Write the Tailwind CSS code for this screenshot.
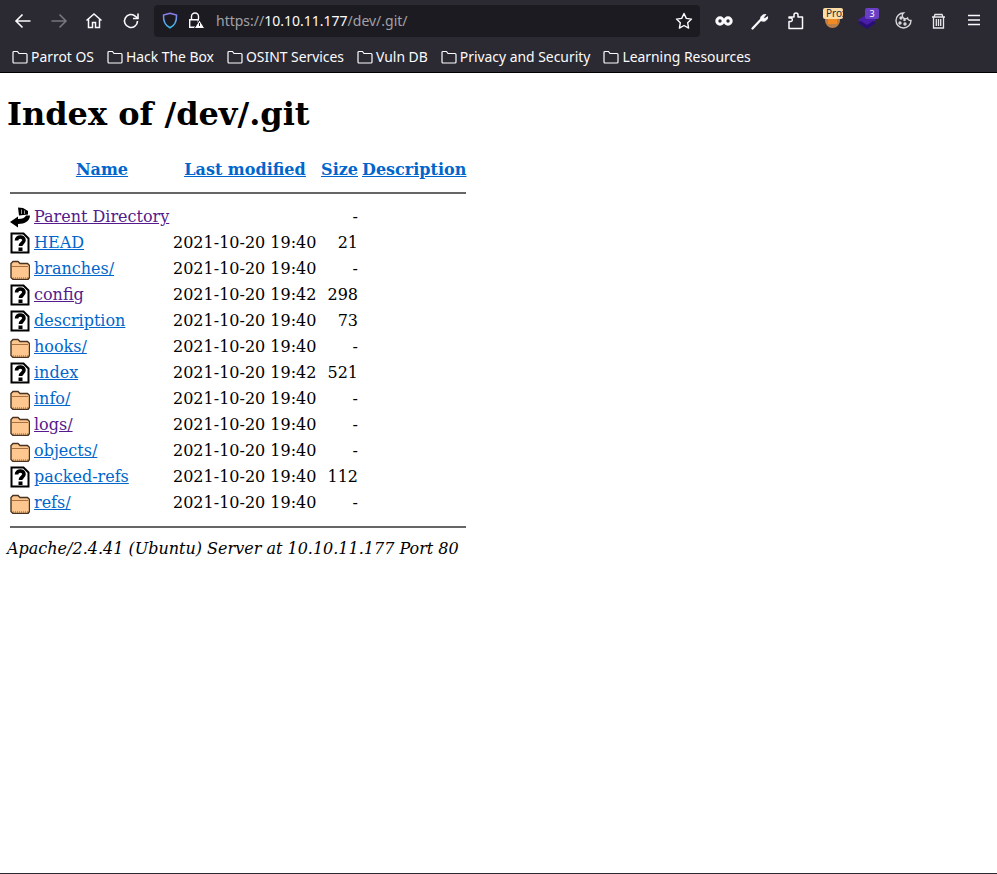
<!DOCTYPE html>
<html lang="en">
<head>
  <meta charset="UTF-8">
  <title>Index of /dev/.git</title>
  <script src="https://cdn.jsdelivr.net/npm/@tailwindcss/browser@4"></script>
</head>
<body class="h-[874px] overflow-hidden bg-white font-['DejaVu_Serif',serif] text-black flex flex-col">
  <!-- browser chrome -->
  <header class="h-[73px] shrink-0 bg-[#2b2a33] border-b border-black font-['Noto_Sans',sans-serif] text-[#fbfbfe]">
    <div class="h-[41px] flex items-center relative">
      <div class="flex items-center pl-[13px] gap-[16px] w-[154px]">
        <svg class="w-5 h-5" viewBox="0 0 20 20" fill="none" stroke="#fbfbfe" stroke-width="1.6"><path d="M17.5 10H3M9.5 3.5 3 10l6.5 6.5"/></svg>
        <svg class="w-5 h-5" viewBox="0 0 20 20" fill="none" stroke="#77767d" stroke-width="1.6"><path d="M2.500 10H17M10.500 3.500 17 10l-6.500 6.500"/></svg>
        <svg class="w-[18px] h-[18px]" viewBox="0 0 18 18" fill="none" stroke="#fbfbfe" stroke-width="1.500"><path d="M1.500 8.500 9 2l7.500 6.500M3.500 7v8.500h4v-5h3v5h4V7"/></svg>
        <svg class="w-[18px] h-[18px] ml-[3px]" viewBox="0 0 18 18" fill="none" stroke="#fbfbfe" stroke-width="1.600"><path d="M15.500 9a6.500 6.500 0 1 1-2-4.700L16 6.500"/><path d="M16 1.500v5h-5"/></svg>
      </div>
      <div class="w-[546px] h-8 bg-[#1c1b22] rounded-[4px] flex items-center pl-[8px] pr-[7px] text-[14px]">
        <svg class="w-[16px] h-[17px] shrink-0" viewBox="0 0 16 17" fill="none" stroke-width="1.500"><defs><linearGradient id="shield" x1="0" y1="0" x2="0" y2="1"><stop offset="0" stop-color="#8f7cf0"/><stop offset="1" stop-color="#38c0e8"/></linearGradient></defs><path stroke="url(#shield)" d="M8 1.200 14.500 3c.300 6-1.500 10.500-6.500 12.800C3 13.500 1.200 9 1.500 3z"/></svg>
        <svg class="w-[17px] h-[17px] ml-[10px] shrink-0" viewBox="0 0 17 17"><path d="M3.500 7V4.500a3.500 3.500 0 0 1 7 0V7" fill="none" stroke="#fbfbfe" stroke-width="1.400"/><path d="M1.700 7.700h8.600v7.500H1.700z" fill="none" stroke="#fbfbfe" stroke-width="1.400"/><path d="M11.500 8 16.800 16.500H6.200z" fill="#fbfbfe" stroke="#1c1b22"/><path d="M11 11h1v3h-1z" fill="#1c1b22"/></svg>
        <span class="ml-[11px] text-[#a1a1a6] whitespace-nowrap">https://<span class="text-[#fbfbfe]">10.10.11.177</span>/dev/.git/</span>
        <svg class="w-[18px] h-[18px] ml-auto" viewBox="0 0 18 18" fill="none" stroke="#fbfbfe" stroke-width="1.400" stroke-linejoin="round"><path d="M9 1.500l2.300 4.900 5.200.7-3.800 3.700.9 5.300L9 13.500l-4.600 2.600.9-5.300L1.500 7.100l5.200-.7z"/></svg>
      </div>
      <!-- extension icons -->
      <div class="flex-1 relative h-full">
        <svg class="absolute left-[15px] top-[13px] w-[18px] h-[16px]" viewBox="0 0 18 16" fill="none" stroke="#fbfbfe" stroke-width="3"><circle cx="5" cy="8" r="3.200"/><circle cx="13" cy="8" r="3.200"/></svg>
        <svg class="absolute left-[51px] top-[12px] w-[18px] h-[18px]" viewBox="0 0 18 18" fill="none" stroke="#fbfbfe" stroke-width="2.200" stroke-linecap="round"><path d="M1.500 16.500 9.500 8"/><path d="M9.800 8.500c-1.200-3 1-6.200 5-6l-2.300 2.800 1.400 1.300 2.700-1.900c.2 3.500-3 5.600-6.200 4.100" fill="#fbfbfe" stroke-width="1"/></svg>
        <svg class="absolute left-[87px] top-[12px] w-[18px] h-[18px]" viewBox="0 0 18 18" fill="none" stroke="#fbfbfe" stroke-width="1.500" stroke-linejoin="round"><path d="M2 16.500V9.500h2a1.800 1.800 0 0 0 0-3.500H2V5h5V3a2 2 0 0 1 4 0v2h4.500v11.500z"/></svg>
        <div class="absolute left-[125px] top-[13px] w-[15px] h-[15px] rounded-full bg-[#b9804a]"></div>
        <div class="absolute left-[128px] top-[19px] w-[9px] h-[5px] bg-[#f08a24]"></div>
        <div class="absolute left-[123px] top-[8px] w-[20px] h-[11px] bg-[#fcdca6] rounded-[2px] overflow-hidden text-[#2b2a33] text-[10px] leading-[11px] pl-[3px] whitespace-nowrap">Prox</div>
        <svg class="absolute left-[158px] top-[14px] w-[18px] h-[16px]" viewBox="0 0 18 16"><path d="M9 0 18 6 9 12 0 6z" fill="#4a1fa8"/><path d="M0 9l9 6 9-6-3-2-6 4-6-4z" fill="#2a0e78"/></svg>
        <div class="absolute left-[165px] top-[8px] w-[14px] h-[11px] bg-[#6a3fc4] rounded-[2px] text-white text-[9px] leading-[11px] text-center">3</div>
        <svg class="absolute left-[195px] top-[12px] w-[17px] h-[17px]" viewBox="0 0 17 17" fill="none" stroke="#d8d8dc" stroke-width="1.400"><path d="M8.500 1A7.500 7.500 0 1 0 16 8.500 3 3 0 0 1 12.500 6 3 3 0 0 1 8.500 1z"/><circle cx="6" cy="6" r="1" fill="#d8d8dc"/><circle cx="5" cy="11" r="1" fill="#d8d8dc"/><circle cx="10" cy="12" r="1" fill="#d8d8dc"/><circle cx="9.500" cy="8" r=".6" fill="#d8d8dc"/></svg>
        <svg class="absolute left-[231px] top-[13px] w-[15px] h-[16px]" viewBox="0 0 15 16" fill="none" stroke="#e8e8ea" stroke-width="1.300"><path d="M1 4h13M4 1.500h7L12 4H3zM2.500 4v11h10V4M5.300 6v7M7.500 6v7M9.700 6v7"/></svg>
        <svg class="absolute left-[267px] top-[14px] w-[14px] h-[12px]" viewBox="0 0 14 12" stroke="#fbfbfe" stroke-width="1.500"><path d="M1 1.500h12M1 6h12M1 10.500h12"/></svg>
      </div>
    </div>
    <nav class="h-[31px] flex items-start pl-[12px] pt-[4px] gap-[13px] text-[13.9px] leading-[24px] whitespace-nowrap">
      <a class="flex items-center gap-[3px]"><svg class="w-4 h-4" viewBox="0 0 16 16" fill="none" stroke="#fbfbfe" stroke-width="1.200"><path d="M1 13V3.500a1 1 0 0 1 1-1h3.500L7 4.500h7a1 1 0 0 1 1 1V13a1 1 0 0 1-1 1H2a1 1 0 0 1-1-1z"/></svg>Parrot OS</a>
      <a class="flex items-center gap-[3px]"><svg class="w-4 h-4" viewBox="0 0 16 16" fill="none" stroke="#fbfbfe" stroke-width="1.200"><path d="M1 13V3.500a1 1 0 0 1 1-1h3.500L7 4.500h7a1 1 0 0 1 1 1V13a1 1 0 0 1-1 1H2a1 1 0 0 1-1-1z"/></svg>Hack The Box</a>
      <a class="flex items-center gap-[3px]"><svg class="w-4 h-4" viewBox="0 0 16 16" fill="none" stroke="#fbfbfe" stroke-width="1.200"><path d="M1 13V3.500a1 1 0 0 1 1-1h3.500L7 4.500h7a1 1 0 0 1 1 1V13a1 1 0 0 1-1 1H2a1 1 0 0 1-1-1z"/></svg>OSINT Services</a>
      <a class="flex items-center gap-[3px]"><svg class="w-4 h-4" viewBox="0 0 16 16" fill="none" stroke="#fbfbfe" stroke-width="1.200"><path d="M1 13V3.500a1 1 0 0 1 1-1h3.500L7 4.500h7a1 1 0 0 1 1 1V13a1 1 0 0 1-1 1H2a1 1 0 0 1-1-1z"/></svg>Vuln DB</a>
      <a class="flex items-center gap-[3px]"><svg class="w-4 h-4" viewBox="0 0 16 16" fill="none" stroke="#fbfbfe" stroke-width="1.200"><path d="M1 13V3.500a1 1 0 0 1 1-1h3.500L7 4.500h7a1 1 0 0 1 1 1V13a1 1 0 0 1-1 1H2a1 1 0 0 1-1-1z"/></svg>Privacy and Security</a>
      <a class="flex items-center gap-[3px]"><svg class="w-4 h-4" viewBox="0 0 16 16" fill="none" stroke="#fbfbfe" stroke-width="1.200"><path d="M1 13V3.500a1 1 0 0 1 1-1h3.500L7 4.500h7a1 1 0 0 1 1 1V13a1 1 0 0 1-1 1H2a1 1 0 0 1-1-1z"/></svg>Learning Resources</a>
    </nav>
  </header>

  <!-- directory listing -->
  <main class="flex-1 pl-[7px] text-[16px] leading-[26px]">
    <h1 class="text-[32px] leading-[38px] font-bold mt-[22px] mb-[24px] whitespace-nowrap">Index of /dev/.git</h1>
    <div class="w-[459px] pl-[3px] whitespace-nowrap">
      <div class="grid grid-cols-[163px_144px_41px_1fr] h-[26px] font-bold text-[#0066cc] underline">
        <a class="text-center pl-[23px] pr-[2px]">Name</a>
        <a class="text-center">Last modified</a>
        <a class="text-right">Size</a>
        <a class="pl-[4px]">Description</a>
      </div>
      <div class="h-[2px] bg-[#666] mt-[9px] mb-[10px]"></div>
      <div class="grid grid-cols-[163px_144px_41px_1fr] h-[26px]">
        <div class="flex items-center gap-[4px]"><svg class="w-5 h-[22px] shrink-0" viewBox="0 0 20 22"><path d="M0 16 8 10.500V13C12 13 15 12 16 9.500H20C20 14.500 15 18 8 18V21.500Z" fill="#000"/><path d="M8 1.500 13 2 18 5V8.500L9 9.500Z" fill="#000"/><path d="M11 3.500h1v4.500h-1zM14 4.500h1v3.500h-1z" fill="#999"/></svg><a class="text-[#551a8b] underline">Parent Directory</a></div>
        <span></span><span class="text-right">-</span><span></span>
      </div>
      <div class="grid grid-cols-[163px_144px_41px_1fr] h-[26px]">
        <div class="flex items-center gap-[4px]"><svg class="w-5 h-[22px] shrink-0" viewBox="0 0 20 22"><path d="M1.500 1.500H13.500L18.500 6.500V20.500H1.500Z" fill="#fff" stroke="#000" stroke-width="2"/><path d="M6.500 8.500C6.500 3.800 14 3.800 14 8.300C14 11 10.500 11 10.500 14" fill="none" stroke="#000" stroke-width="3.600"/><path d="M8.500 15.500H12.500V19H8.500Z" fill="#000"/></svg><a class="text-[#0066cc] underline">HEAD</a></div>
        <span>2021-10-20 19:40</span><span class="text-right">21</span><span></span>
      </div>
      <div class="grid grid-cols-[163px_144px_41px_1fr] h-[26px]">
        <div class="flex items-center gap-[4px]"><svg class="w-5 h-[22px] shrink-0" viewBox="0 0 20 22"><path d="M1 8V5.500L3 3.500H8L10 5.500H17.500L19.500 7.500V19.500L18 21.500H3L1 19.500Z" fill="#fdc78f" stroke="#4a3320" stroke-width="1.400"/><path d="M2 8.500H18" stroke="#a87040"/><path d="M3 20H18" stroke="#8a5a30" stroke-dasharray="1 1"/></svg><a class="text-[#0066cc] underline">branches/</a></div>
        <span>2021-10-20 19:40</span><span class="text-right">-</span><span></span>
      </div>
      <div class="grid grid-cols-[163px_144px_41px_1fr] h-[26px]">
        <div class="flex items-center gap-[4px]"><svg class="w-5 h-[22px] shrink-0" viewBox="0 0 20 22"><path d="M1.500 1.500H13.500L18.500 6.500V20.500H1.500Z" fill="#fff" stroke="#000" stroke-width="2"/><path d="M6.500 8.500C6.500 3.800 14 3.800 14 8.300C14 11 10.500 11 10.500 14" fill="none" stroke="#000" stroke-width="3.600"/><path d="M8.500 15.500H12.500V19H8.500Z" fill="#000"/></svg><a class="text-[#551a8b] underline">config</a></div>
        <span>2021-10-20 19:42</span><span class="text-right">298</span><span></span>
      </div>
      <div class="grid grid-cols-[163px_144px_41px_1fr] h-[26px]">
        <div class="flex items-center gap-[4px]"><svg class="w-5 h-[22px] shrink-0" viewBox="0 0 20 22"><path d="M1.500 1.500H13.500L18.500 6.500V20.500H1.500Z" fill="#fff" stroke="#000" stroke-width="2"/><path d="M6.500 8.500C6.500 3.800 14 3.800 14 8.300C14 11 10.500 11 10.500 14" fill="none" stroke="#000" stroke-width="3.600"/><path d="M8.500 15.500H12.500V19H8.500Z" fill="#000"/></svg><a class="text-[#0066cc] underline">description</a></div>
        <span>2021-10-20 19:40</span><span class="text-right">73</span><span></span>
      </div>
      <div class="grid grid-cols-[163px_144px_41px_1fr] h-[26px]">
        <div class="flex items-center gap-[4px]"><svg class="w-5 h-[22px] shrink-0" viewBox="0 0 20 22"><path d="M1 8V5.500L3 3.500H8L10 5.500H17.500L19.500 7.500V19.500L18 21.500H3L1 19.500Z" fill="#fdc78f" stroke="#4a3320" stroke-width="1.400"/><path d="M2 8.500H18" stroke="#a87040"/><path d="M3 20H18" stroke="#8a5a30" stroke-dasharray="1 1"/></svg><a class="text-[#0066cc] underline">hooks/</a></div>
        <span>2021-10-20 19:40</span><span class="text-right">-</span><span></span>
      </div>
      <div class="grid grid-cols-[163px_144px_41px_1fr] h-[26px]">
        <div class="flex items-center gap-[4px]"><svg class="w-5 h-[22px] shrink-0" viewBox="0 0 20 22"><path d="M1.500 1.500H13.500L18.500 6.500V20.500H1.500Z" fill="#fff" stroke="#000" stroke-width="2"/><path d="M6.500 8.500C6.500 3.800 14 3.800 14 8.300C14 11 10.500 11 10.500 14" fill="none" stroke="#000" stroke-width="3.600"/><path d="M8.500 15.500H12.500V19H8.500Z" fill="#000"/></svg><a class="text-[#0066cc] underline">index</a></div>
        <span>2021-10-20 19:42</span><span class="text-right">521</span><span></span>
      </div>
      <div class="grid grid-cols-[163px_144px_41px_1fr] h-[26px]">
        <div class="flex items-center gap-[4px]"><svg class="w-5 h-[22px] shrink-0" viewBox="0 0 20 22"><path d="M1 8V5.500L3 3.500H8L10 5.500H17.500L19.500 7.500V19.500L18 21.500H3L1 19.500Z" fill="#fdc78f" stroke="#4a3320" stroke-width="1.400"/><path d="M2 8.500H18" stroke="#a87040"/><path d="M3 20H18" stroke="#8a5a30" stroke-dasharray="1 1"/></svg><a class="text-[#0066cc] underline">info/</a></div>
        <span>2021-10-20 19:40</span><span class="text-right">-</span><span></span>
      </div>
      <div class="grid grid-cols-[163px_144px_41px_1fr] h-[26px]">
        <div class="flex items-center gap-[4px]"><svg class="w-5 h-[22px] shrink-0" viewBox="0 0 20 22"><path d="M1 8V5.500L3 3.500H8L10 5.500H17.500L19.500 7.500V19.500L18 21.500H3L1 19.500Z" fill="#fdc78f" stroke="#4a3320" stroke-width="1.400"/><path d="M2 8.500H18" stroke="#a87040"/><path d="M3 20H18" stroke="#8a5a30" stroke-dasharray="1 1"/></svg><a class="text-[#551a8b] underline">logs/</a></div>
        <span>2021-10-20 19:40</span><span class="text-right">-</span><span></span>
      </div>
      <div class="grid grid-cols-[163px_144px_41px_1fr] h-[26px]">
        <div class="flex items-center gap-[4px]"><svg class="w-5 h-[22px] shrink-0" viewBox="0 0 20 22"><path d="M1 8V5.500L3 3.500H8L10 5.500H17.500L19.500 7.500V19.500L18 21.500H3L1 19.500Z" fill="#fdc78f" stroke="#4a3320" stroke-width="1.400"/><path d="M2 8.500H18" stroke="#a87040"/><path d="M3 20H18" stroke="#8a5a30" stroke-dasharray="1 1"/></svg><a class="text-[#0066cc] underline">objects/</a></div>
        <span>2021-10-20 19:40</span><span class="text-right">-</span><span></span>
      </div>
      <div class="grid grid-cols-[163px_144px_41px_1fr] h-[26px]">
        <div class="flex items-center gap-[4px]"><svg class="w-5 h-[22px] shrink-0" viewBox="0 0 20 22"><path d="M1.500 1.500H13.500L18.500 6.500V20.500H1.500Z" fill="#fff" stroke="#000" stroke-width="2"/><path d="M6.500 8.500C6.500 3.800 14 3.800 14 8.300C14 11 10.500 11 10.500 14" fill="none" stroke="#000" stroke-width="3.600"/><path d="M8.500 15.500H12.500V19H8.500Z" fill="#000"/></svg><a class="text-[#0066cc] underline">packed-refs</a></div>
        <span>2021-10-20 19:40</span><span class="text-right">112</span><span></span>
      </div>
      <div class="grid grid-cols-[163px_144px_41px_1fr] h-[26px]">
        <div class="flex items-center gap-[4px]"><svg class="w-5 h-[22px] shrink-0" viewBox="0 0 20 22"><path d="M1 8V5.500L3 3.500H8L10 5.500H17.500L19.500 7.500V19.500L18 21.500H3L1 19.500Z" fill="#fdc78f" stroke="#4a3320" stroke-width="1.400"/><path d="M2 8.500H18" stroke="#a87040"/><path d="M3 20H18" stroke="#8a5a30" stroke-dasharray="1 1"/></svg><a class="text-[#0066cc] underline">refs/</a></div>
        <span>2021-10-20 19:40</span><span class="text-right">-</span><span></span>
      </div>
      <div class="h-[2px] bg-[#666] mt-[10px]"></div>
    </div>
    <address class="italic mt-[8px] whitespace-nowrap">Apache/2.4.41 (Ubuntu) Server at 10.10.11.177 Port 80</address>
  </main>
  <div class="h-px bg-[#2b2a33] shrink-0"></div>
</body>
</html>
